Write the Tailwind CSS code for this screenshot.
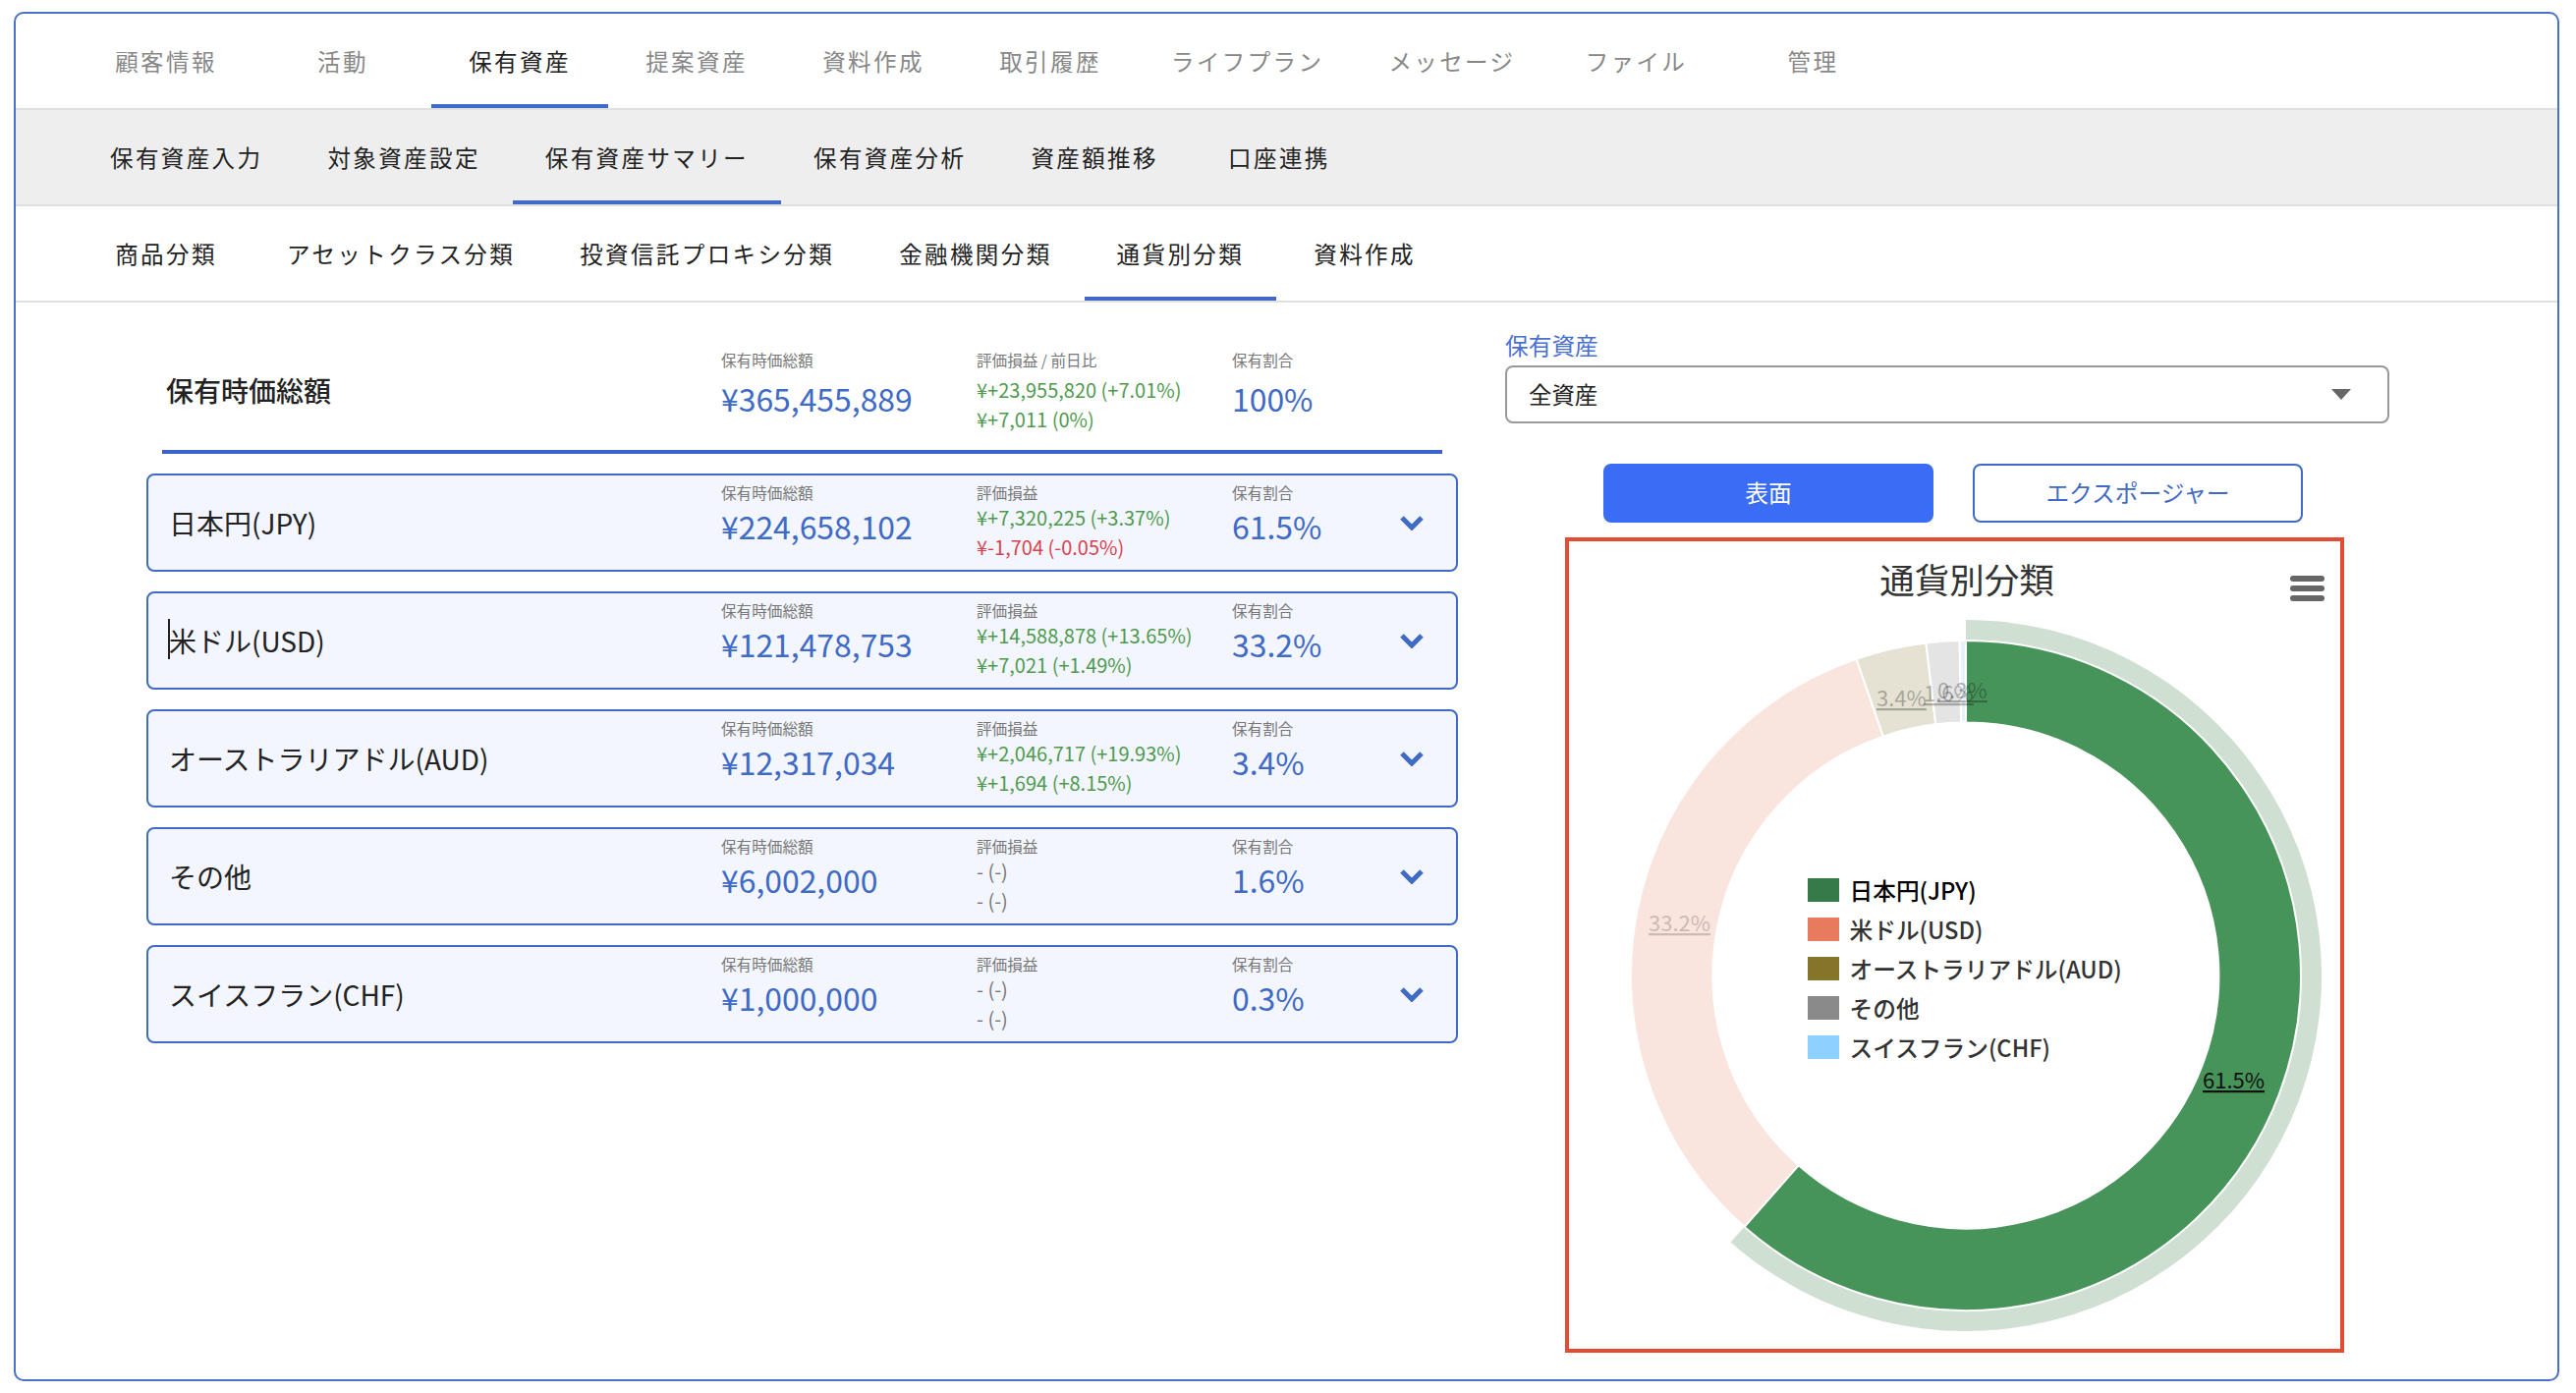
<!DOCTYPE html>
<html lang="ja">
<head>
    <meta charset="UTF-8">
    <title>通貨別分類</title>
    <script src="https://cdn.jsdelivr.net/npm/@tailwindcss/browser@4"></script>
</head>
<body class="bg-white text-[#222] font-['Noto_Sans_CJK_JP',sans-serif]">
<div class="pt-[12px] pl-[14px]">
<div class="w-[2591px] h-[1394px] border-2 border-[#4a70c8] rounded-[10px] overflow-hidden">

    <!-- tabs -->
    <nav class="flex h-[98px] pl-[63px] border-b-2 border-[#e0e0e0] text-[23.5px] tracking-[2.4px] text-[#888]">
        <a class="flex items-center justify-center min-w-[180px] px-[33px] pt-[1px] border-y-4 border-transparent">顧客情報</a>
        <a class="flex items-center justify-center min-w-[180px] px-[33px] pt-[1px] border-y-4 border-transparent">活動</a>
        <a class="flex items-center justify-center min-w-[180px] px-[33px] pt-[1px] border-y-4 border-t-transparent border-b-[#3f6ac5] text-[#222]">保有資産</a>
        <a class="flex items-center justify-center min-w-[180px] px-[33px] pt-[1px] border-y-4 border-transparent">提案資産</a>
        <a class="flex items-center justify-center min-w-[180px] px-[33px] pt-[1px] border-y-4 border-transparent">資料作成</a>
        <a class="flex items-center justify-center min-w-[180px] px-[33px] pt-[1px] border-y-4 border-transparent">取引履歴</a>
        <a class="flex items-center justify-center min-w-[180px] px-[33px] pt-[1px] border-y-4 border-transparent">ライフプラン</a>
        <a class="flex items-center justify-center min-w-[180px] px-[33px] pt-[1px] border-y-4 border-transparent">メッセージ</a>
        <a class="flex items-center justify-center min-w-[180px] px-[33px] pt-[1px] border-y-4 border-transparent">ファイル</a>
        <a class="flex items-center justify-center min-w-[180px] px-[33px] pt-[1px] border-y-4 border-transparent">管理</a>
    </nav>
    <nav class="flex h-[98px] pl-[63px] bg-[#eeeeee] border-b-2 border-[#e0e0e0] text-[23.5px] tracking-[2.4px]">
        <a class="flex items-center justify-center min-w-[180px] px-[33px] pt-[1px] border-y-4 border-transparent">保有資産入力</a>
        <a class="flex items-center justify-center min-w-[180px] px-[33px] pt-[1px] border-y-4 border-transparent">対象資産設定</a>
        <a class="flex items-center justify-center min-w-[180px] px-[33px] pt-[1px] border-y-4 border-t-transparent border-b-[#3f6ac5]">保有資産サマリー</a>
        <a class="flex items-center justify-center min-w-[180px] px-[33px] pt-[1px] border-y-4 border-transparent">保有資産分析</a>
        <a class="flex items-center justify-center min-w-[180px] px-[33px] pt-[1px] border-y-4 border-transparent">資産額推移</a>
        <a class="flex items-center justify-center min-w-[180px] px-[33px] pt-[1px] border-y-4 border-transparent">口座連携</a>
    </nav>
    <nav class="flex h-[98px] pl-[63px] border-b-2 border-[#e0e0e0] text-[23.5px] tracking-[2.4px]">
        <a class="flex items-center justify-center min-w-[180px] px-[33px] pt-[1px] border-y-4 border-transparent">商品分類</a>
        <a class="flex items-center justify-center min-w-[180px] px-[33px] pt-[1px] border-y-4 border-transparent">アセットクラス分類</a>
        <a class="flex items-center justify-center min-w-[180px] px-[33px] pt-[1px] border-y-4 border-transparent">投資信託プロキシ分類</a>
        <a class="flex items-center justify-center min-w-[180px] px-[33px] pt-[1px] border-y-4 border-transparent">金融機関分類</a>
        <a class="flex items-center justify-center min-w-[180px] px-[33px] pt-[1px] border-y-4 border-t-transparent border-b-[#3f6ac5]">通貨別分類</a>
        <a class="flex items-center justify-center min-w-[180px] px-[33px] pt-[1px] border-y-4 border-transparent">資料作成</a>
    </nav>

    <div class="flex pl-[133px]">

        <!-- left column -->
        <div class="w-[1335px]">
            <div class="mx-[16px] h-[154px] pt-[46px] pl-[4px] border-b-4 border-[#3a62c8] grid grid-cols-[565px_260px_260px_1fr]">
                <div class="h-[85px] flex items-center text-[28px] font-medium">保有時価総額</div>
                <div>
                    <p class="text-[15.6px] leading-[24px] text-[#777]">保有時価総額</p>
                    <p class="mt-[7px] text-[31.9px] leading-[40px] text-[#3f6ac5]">¥365,455,889</p>
                </div>
                <div>
                    <p class="text-[15.6px] leading-[24px] text-[#777]">評価損益 / 前日比</p>
                    <p class="mt-[4px] text-[20px] leading-[30px] text-[#4f9a4f]">¥+23,955,820 (+7.01%)</p>
                    <p class="text-[20px] leading-[30px] text-[#4f9a4f]">¥+7,011 (0%)</p>
                </div>
                <div>
                    <p class="text-[15.6px] leading-[24px] text-[#777]">保有割合</p>
                    <p class="mt-[7px] text-[31.9px] leading-[40px] text-[#3f6ac5]">100%</p>
                </div>
            </div>

            <div class="mt-[20px] flex flex-col gap-[20px]">
                <div class="h-[100px] pt-[6px] pl-[21px] border-2 border-[#3f6ac5] rounded-[8px] bg-[#f3f6fe] grid grid-cols-[562px_260px_260px_171px_24px]">
                    <div class="h-[83px] flex items-center text-[28px]">日本円(JPY)</div>
                    <div>
                        <p class="text-[15.6px] leading-[22px] text-[#777]">保有時価総額</p>
                        <p class="mt-[3px] text-[31.9px] leading-[40px] text-[#3f6ac5]">¥224,658,102</p>
                    </div>
                    <div>
                        <p class="text-[15.6px] leading-[22px] text-[#777]">評価損益</p>
                        <p class="text-[20px] leading-[30px] text-[#4f9a4f]">¥+7,320,225 (+3.37%)</p>
                        <p class="text-[20px] leading-[30px] text-[#d9434f]">¥-1,704 (-0.05%)</p>
                    </div>
                    <div>
                        <p class="text-[15.6px] leading-[22px] text-[#777]">保有割合</p>
                        <p class="mt-[3px] text-[31.9px] leading-[40px] text-[#3f6ac5]">61.5%</p>
                    </div>
                    <div class="h-[84px] flex items-center">
                        <svg width="24" height="15" viewBox="0 0 24 15" fill="none" stroke="#3f6ac5" stroke-width="5"><path d="M2 2l10 10L22 2"/></svg>
                    </div>
                </div>

                <div class="h-[100px] pt-[6px] pl-[21px] border-2 border-[#3f6ac5] rounded-[8px] bg-[#f3f6fe] grid grid-cols-[562px_260px_260px_171px_24px]">
                    <div class="relative h-[83px] flex items-center text-[28px]">
                        <span class="absolute -left-[1px] top-[20px] w-[2px] h-[41px] bg-[#222]"></span>
                        米ドル(USD)
                    </div>
                    <div>
                        <p class="text-[15.6px] leading-[22px] text-[#777]">保有時価総額</p>
                        <p class="mt-[3px] text-[31.9px] leading-[40px] text-[#3f6ac5]">¥121,478,753</p>
                    </div>
                    <div>
                        <p class="text-[15.6px] leading-[22px] text-[#777]">評価損益</p>
                        <p class="text-[20px] leading-[30px] text-[#4f9a4f]">¥+14,588,878 (+13.65%)</p>
                        <p class="text-[20px] leading-[30px] text-[#4f9a4f]">¥+7,021 (+1.49%)</p>
                    </div>
                    <div>
                        <p class="text-[15.6px] leading-[22px] text-[#777]">保有割合</p>
                        <p class="mt-[3px] text-[31.9px] leading-[40px] text-[#3f6ac5]">33.2%</p>
                    </div>
                    <div class="h-[84px] flex items-center">
                        <svg width="24" height="15" viewBox="0 0 24 15" fill="none" stroke="#3f6ac5" stroke-width="5"><path d="M2 2l10 10L22 2"/></svg>
                    </div>
                </div>

                <div class="h-[100px] pt-[6px] pl-[21px] border-2 border-[#3f6ac5] rounded-[8px] bg-[#f3f6fe] grid grid-cols-[562px_260px_260px_171px_24px]">
                    <div class="h-[83px] flex items-center text-[28px]">オーストラリアドル(AUD)</div>
                    <div>
                        <p class="text-[15.6px] leading-[22px] text-[#777]">保有時価総額</p>
                        <p class="mt-[3px] text-[31.9px] leading-[40px] text-[#3f6ac5]">¥12,317,034</p>
                    </div>
                    <div>
                        <p class="text-[15.6px] leading-[22px] text-[#777]">評価損益</p>
                        <p class="text-[20px] leading-[30px] text-[#4f9a4f]">¥+2,046,717 (+19.93%)</p>
                        <p class="text-[20px] leading-[30px] text-[#4f9a4f]">¥+1,694 (+8.15%)</p>
                    </div>
                    <div>
                        <p class="text-[15.6px] leading-[22px] text-[#777]">保有割合</p>
                        <p class="mt-[3px] text-[31.9px] leading-[40px] text-[#3f6ac5]">3.4%</p>
                    </div>
                    <div class="h-[84px] flex items-center">
                        <svg width="24" height="15" viewBox="0 0 24 15" fill="none" stroke="#3f6ac5" stroke-width="5"><path d="M2 2l10 10L22 2"/></svg>
                    </div>
                </div>

                <div class="h-[100px] pt-[6px] pl-[21px] border-2 border-[#3f6ac5] rounded-[8px] bg-[#f3f6fe] grid grid-cols-[562px_260px_260px_171px_24px]">
                    <div class="h-[83px] flex items-center text-[28px]">その他</div>
                    <div>
                        <p class="text-[15.6px] leading-[22px] text-[#777]">保有時価総額</p>
                        <p class="mt-[3px] text-[31.9px] leading-[40px] text-[#3f6ac5]">¥6,002,000</p>
                    </div>
                    <div>
                        <p class="text-[15.6px] leading-[22px] text-[#777]">評価損益</p>
                        <p class="text-[20px] leading-[30px] text-[#777]">- (-)</p>
                        <p class="text-[20px] leading-[30px] text-[#777]">- (-)</p>
                    </div>
                    <div>
                        <p class="text-[15.6px] leading-[22px] text-[#777]">保有割合</p>
                        <p class="mt-[3px] text-[31.9px] leading-[40px] text-[#3f6ac5]">1.6%</p>
                    </div>
                    <div class="h-[84px] flex items-center">
                        <svg width="24" height="15" viewBox="0 0 24 15" fill="none" stroke="#3f6ac5" stroke-width="5"><path d="M2 2l10 10L22 2"/></svg>
                    </div>
                </div>

                <div class="h-[100px] pt-[6px] pl-[21px] border-2 border-[#3f6ac5] rounded-[8px] bg-[#f3f6fe] grid grid-cols-[562px_260px_260px_171px_24px]">
                    <div class="h-[83px] flex items-center text-[28px]">スイスフラン(CHF)</div>
                    <div>
                        <p class="text-[15.6px] leading-[22px] text-[#777]">保有時価総額</p>
                        <p class="mt-[3px] text-[31.9px] leading-[40px] text-[#3f6ac5]">¥1,000,000</p>
                    </div>
                    <div>
                        <p class="text-[15.6px] leading-[22px] text-[#777]">評価損益</p>
                        <p class="text-[20px] leading-[30px] text-[#777]">- (-)</p>
                        <p class="text-[20px] leading-[30px] text-[#777]">- (-)</p>
                    </div>
                    <div>
                        <p class="text-[15.6px] leading-[22px] text-[#777]">保有割合</p>
                        <p class="mt-[3px] text-[31.9px] leading-[40px] text-[#3f6ac5]">0.3%</p>
                    </div>
                    <div class="h-[84px] flex items-center">
                        <svg width="24" height="15" viewBox="0 0 24 15" fill="none" stroke="#3f6ac5" stroke-width="5"><path d="M2 2l10 10L22 2"/></svg>
                    </div>
                </div>
            </div>
        </div>

        <!-- right column -->
        <div class="ml-[48px] w-[900px] pt-[28px]">
            <p class="text-[23.7px] leading-[30px] text-[#4a70d0]">保有資産</p>
            <div class="mt-[6px] h-[59px] flex items-center justify-between pl-[22px] pr-[37px] border-2 border-[#999] rounded-[8px] text-[23.4px]">
                <span>全資産</span>
                <svg width="20" height="11" viewBox="0 0 20 11" fill="#666"><path d="M0 0h20L10 11z"/></svg>
            </div>
            <div class="mt-[41px] ml-[100px] flex gap-[40px] text-[23.7px]">
                <button class="w-[336px] h-[60px] pb-[1px] rounded-[8px] bg-[#3a6cf4] text-white">表面</button>
                <button class="w-[336px] h-[60px] pb-[1px] rounded-[8px] bg-white border-2 border-[#3f6ac5] text-[#3f6ac5]">エクスポージャー</button>
            </div>

            <!-- chart -->
            <div class="relative mt-[15px] ml-[61px] w-[793px] h-[830px] border-4 border-[#e34c32]">
                <svg class="absolute inset-0" width="785" height="822" viewBox="1597 551 785 822">
                    <text x="2002" y="604" text-anchor="middle" font-size="35.5" fill="#333">通貨別分類</text>
                    <g fill="#666">
                        <rect x="2331" y="586" width="35" height="6" rx="3"/>
                        <rect x="2331" y="596" width="35" height="6" rx="3"/>
                        <rect x="2331" y="606" width="35" height="6" rx="3"/>
                    </g>
                    <path fill="#cfdfd2" d="M2001 631A362 362 0 1 1 1761.6 1264.5L1775.5 1248.8A341 341 0 1 0 2001 652Z"/>
                    <g stroke="#fff" stroke-width="2">
                        <path fill="#47945a" d="M2001 652A341 341 0 1 1 1775.5 1248.8L1830.7 1186.2A257.5 257.5 0 1 0 2001 735.5Z"/>
                        <path fill="#f9e4de" d="M1775.5 1248.8A341 341 0 0 1 1889.5 670.7L1916.8 749.6A257.5 257.5 0 0 0 1830.7 1186.2Z"/>
                        <path fill="#e5e2d3" d="M1889.5 670.7A341 341 0 0 1 1960.4 654.4L1970.3 737.3A257.5 257.5 0 0 0 1916.8 749.6Z"/>
                        <path fill="#e4e4e4" d="M1960.4 654.4A341 341 0 0 1 1994.6 652.1L1996.1 735.5A257.5 257.5 0 0 0 1970.3 737.3Z"/>
                        <path fill="#e6f3fd" d="M1994.6 652.1A341 341 0 0 1 2001 652L2001 735.5A257.5 257.5 0 0 0 1996.1 735.5Z"/>
                    </g>
                    <g font-size="22">
                        <text x="2242" y="1108" fill="#111" text-decoration="underline">61.5%</text>
                        <text x="1678" y="948" fill="#cdbab5" text-decoration="underline">33.2%</text>
                        <text x="1910" y="719" fill="#000" opacity="0.27" text-decoration="underline">3.4%</text>
                        <text x="1958" y="714" fill="#000" opacity="0.27" text-decoration="underline">1.6%</text>
                        <text x="1972" y="711" fill="#000" opacity="0.27" text-decoration="underline">0.3%</text>
                    </g>
                    <g font-size="23.7" font-weight="500" fill="#333">
                        <rect x="1840" y="894" width="32" height="24" fill="#367a47"/>
                        <text x="1882.5" y="915.5" fill="#000">日本円(JPY)</text>
                        <rect x="1840" y="934" width="32" height="24" fill="#e87a5d"/>
                        <text x="1882.5" y="955.5">米ドル(USD)</text>
                        <rect x="1840" y="974" width="32" height="24" fill="#867529"/>
                        <text x="1882.5" y="995.5">オーストラリアドル(AUD)</text>
                        <rect x="1840" y="1014" width="32" height="24" fill="#8a8a8a"/>
                        <text x="1882.5" y="1035.5">その他</text>
                        <rect x="1840" y="1054" width="32" height="24" fill="#8ed0ff"/>
                        <text x="1882.5" y="1075.5">スイスフラン(CHF)</text>
                    </g>
                </svg>
            </div>
        </div>
    </div>
</div>
</div>
</body>
</html>
